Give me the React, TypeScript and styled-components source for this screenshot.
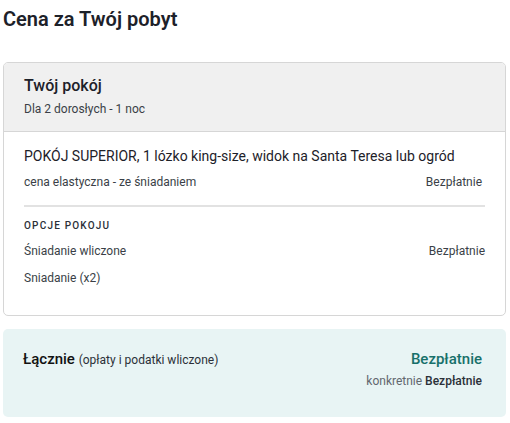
import React from 'react'
import styled, { createGlobalStyle } from 'styled-components'

const GlobalStyle = createGlobalStyle`
  body {
    margin: 0;
    font-family: Roboto, 'Noto Sans', sans-serif;
    color: #1f2430;
    background: #fff;
  }
`

const Page = styled.div`
  padding: 6px 4px 0 3px;
`

const Heading = styled.h2`
  margin: 0 0 30px;
  font-size: 20px;
  line-height: 26px;
  font-weight: 600;
  color: #1d2129;
`

const Card = styled.div`
  border: 1px solid #d6d6d6;
  border-radius: 5px;
  overflow: hidden;
`

const CardHeader = styled.div`
  background: #f0f0f0;
  border-bottom: 1px solid #d6d6d6;
  padding: 13px 20px 14px;
`

const RoomTitle = styled.div`
  font-size: 16px;
  line-height: 20px;
  font-weight: 500;
  color: #1d2129;
`

const Sub = styled.div`
  margin-top: 5px;
  font-size: 12px;
  line-height: 16px;
  color: #3a3f47;
`

const CardBody = styled.div`
  padding: 14px 20px 29px;
`

const RoomName = styled.div`
  font-size: 14px;
  line-height: 20px;
  color: #1d2129;
`

const Row = styled.div<{ $top?: number; $inset?: number }>`
  display: flex;
  justify-content: space-between;
  align-items: center;
  margin-top: ${p => p.$top ?? 0}px;
  padding-right: ${p => p.$inset ?? 0}px;
  font-size: 12px;
  line-height: 16px;
  color: #3a3f47;
`

const Divider = styled.hr`
  margin: 15px 0 12px;
  border: 0;
  border-top: 2px solid #e2e2e2;
`

const SectionLabel = styled.div`
  font-size: 10px;
  line-height: 14px;
  letter-spacing: 1.2px;
  font-weight: 500;
  color: #2b3038;
  text-transform: uppercase;
`

const TotalBox = styled.div`
  margin-top: 13px;
  background: #e8f4f4;
  border-radius: 5px;
  padding: 20px 24px 28px 20px;
  display: flex;
  justify-content: space-between;
  align-items: flex-start;
`

const TotalLabel = styled.div`
  font-size: 15px;
  line-height: 20px;
  font-weight: 500;
  color: #111;
  span {
    font-size: 12px;
    font-weight: 400;
    color: #2b3038;
  }
`

const TotalRight = styled.div`
  text-align: right;
`

const Price = styled.div`
  font-size: 15px;
  line-height: 20px;
  font-weight: 500;
  color: #17706a;
`

const PriceNote = styled.div`
  margin-top: 4px;
  font-size: 12px;
  line-height: 16px;
  color: #62676e;
  b {
    font-weight: 500;
    color: #2b3038;
  }
`

export default function App() {
  return (
    <Page>
      <GlobalStyle />
      <Heading>Cena za Twój pobyt</Heading>
      <Card>
        <CardHeader>
          <RoomTitle>Twój pokój</RoomTitle>
          <Sub>Dla 2 dorosłych - 1 noc</Sub>
        </CardHeader>
        <CardBody>
          <RoomName>POKÓJ SUPERIOR, 1 lózko king-size, widok na Santa Teresa lub ogród</RoomName>
          <Row $top={8} $inset={3}>
            <span>cena elastyczna - ze śniadaniem</span>
            <span>Bezpłatnie</span>
          </Row>
          <Divider />
          <SectionLabel>Opcje pokoju</SectionLabel>
          <Row $top={10}>
            <span>Śniadanie wliczone</span>
            <span>Bezpłatnie</span>
          </Row>
          <Row $top={11}>
            <span>Sniadanie (x2)</span>
          </Row>
        </CardBody>
      </Card>
      <TotalBox>
        <TotalLabel>
          Łącznie <span>(opłaty i podatki wliczone)</span>
        </TotalLabel>
        <TotalRight>
          <Price>Bezpłatnie</Price>
          <PriceNote>
            konkretnie <b>Bezpłatnie</b>
          </PriceNote>
        </TotalRight>
      </TotalBox>
    </Page>
  )
}
